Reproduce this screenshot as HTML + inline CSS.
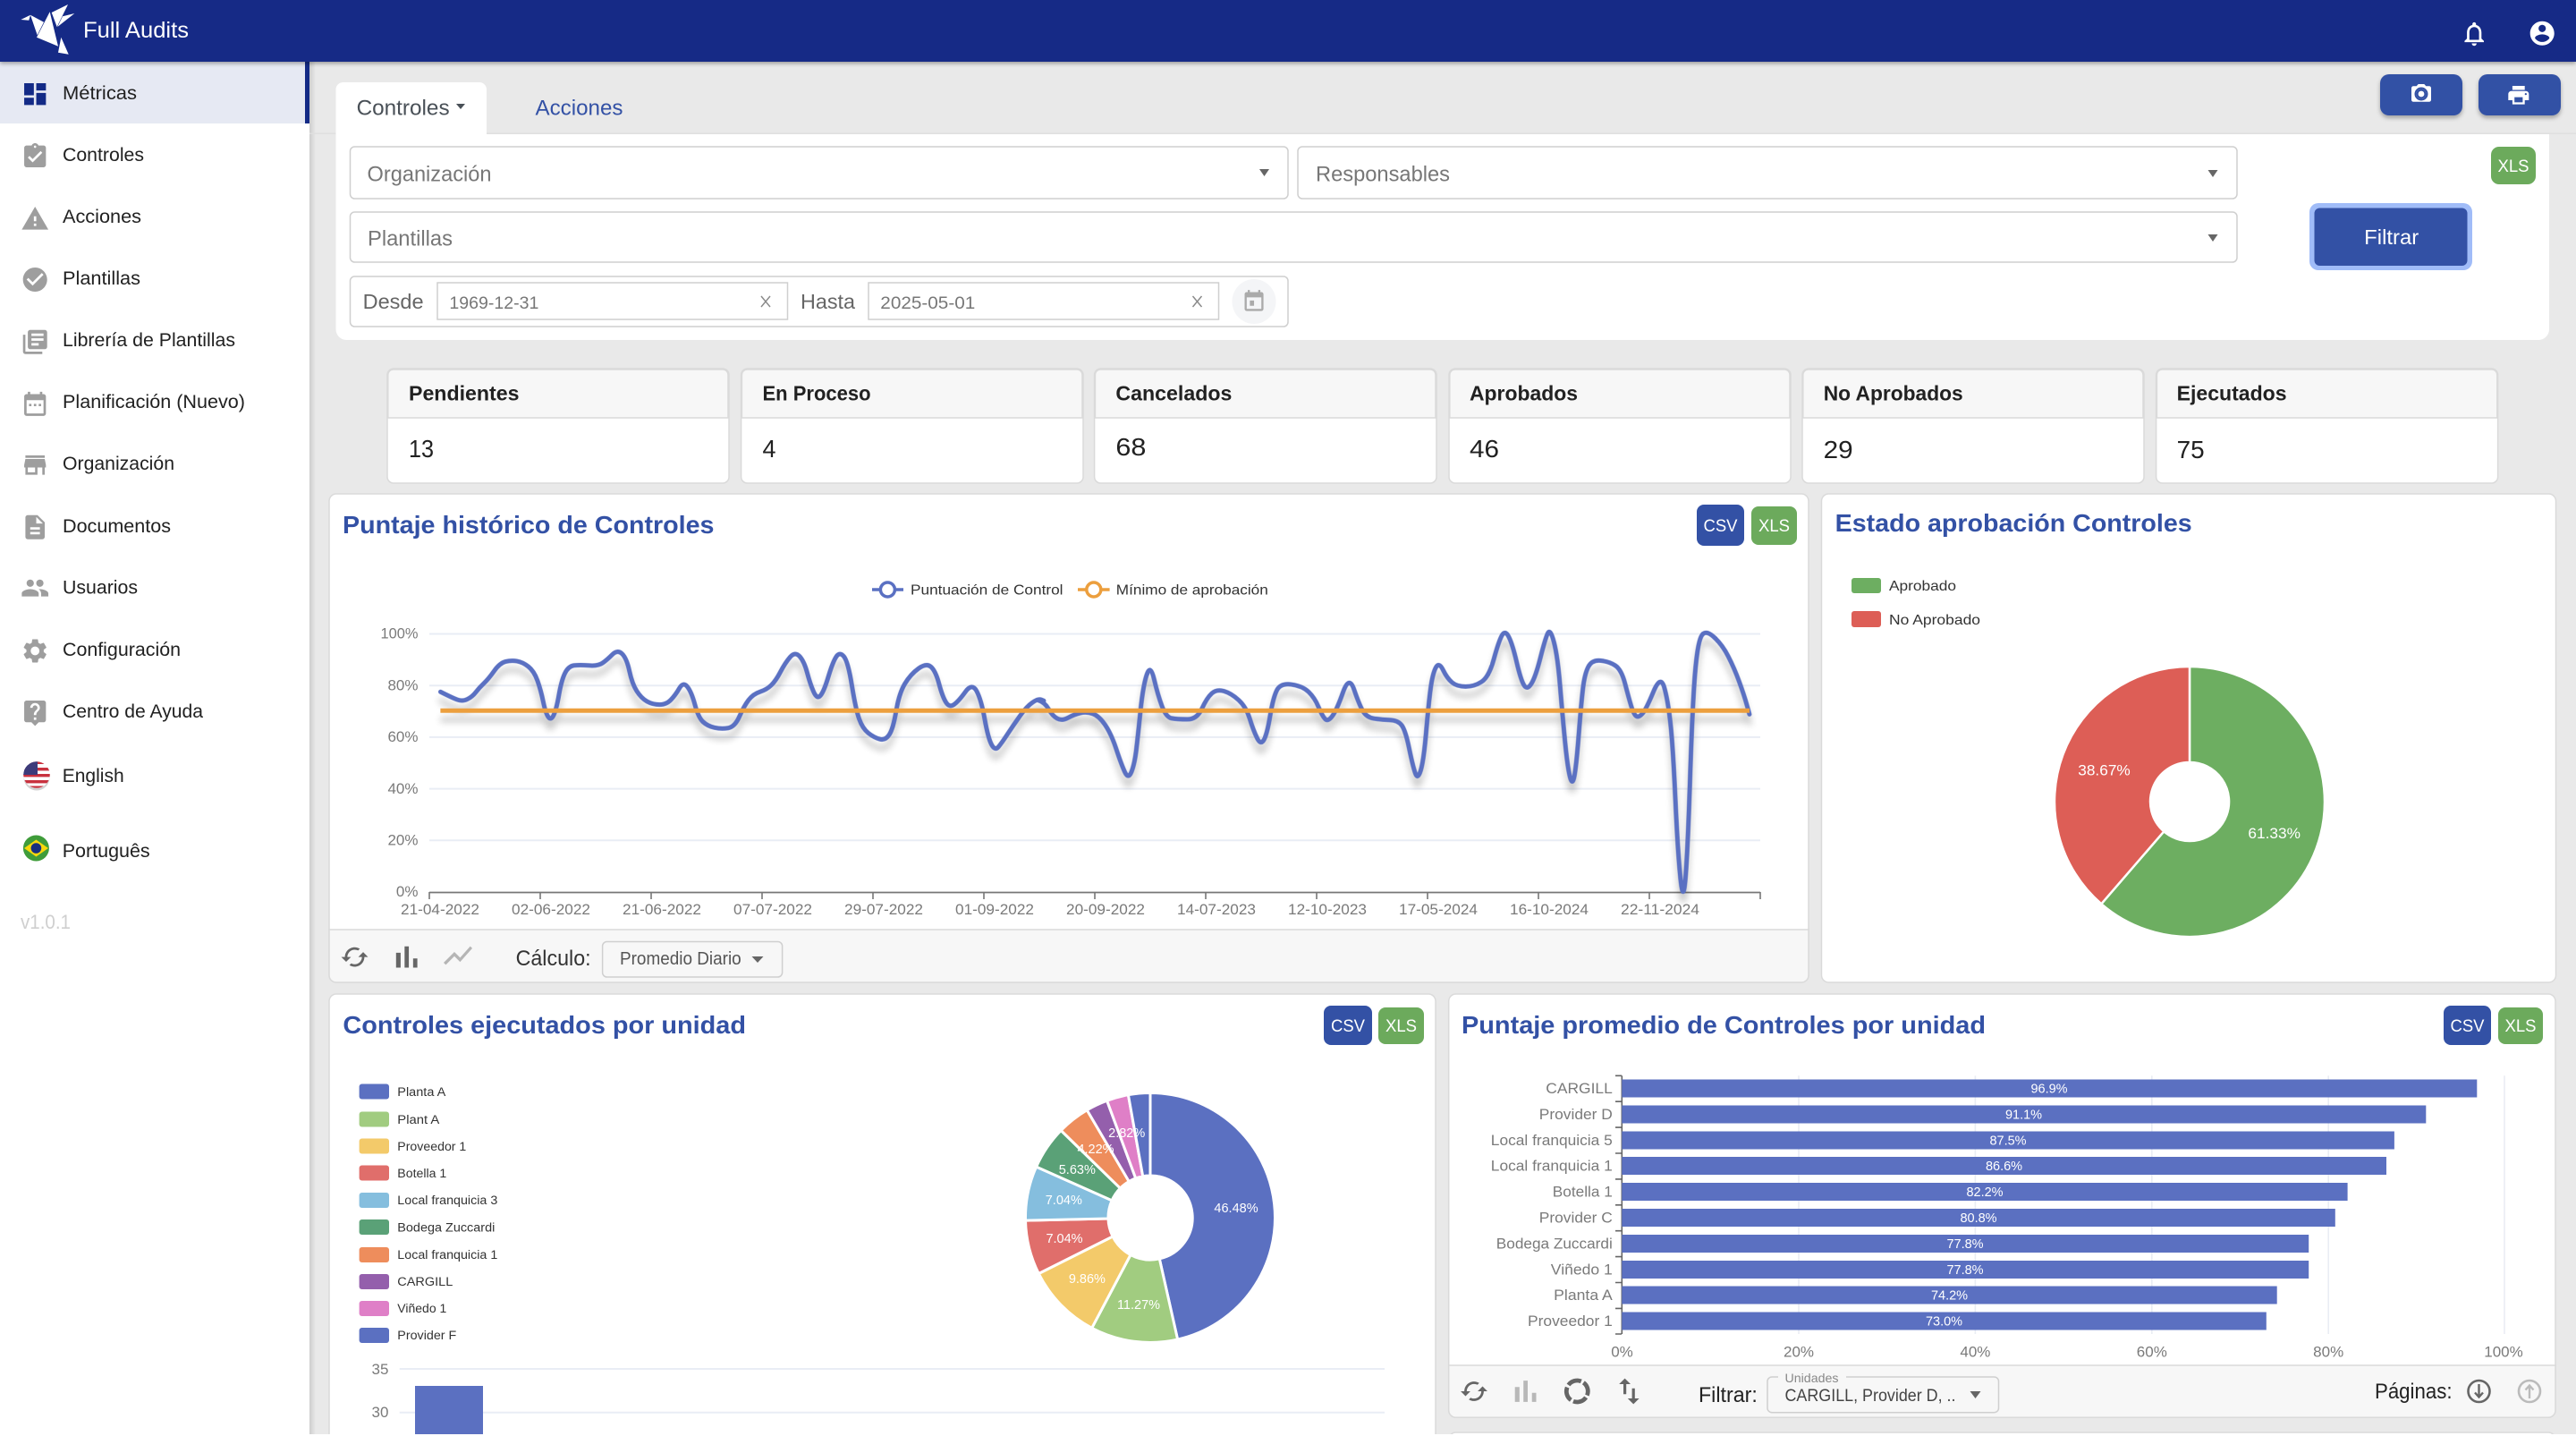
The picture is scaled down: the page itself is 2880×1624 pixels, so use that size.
<!DOCTYPE html>
<html lang="es">
<head>
<meta charset="utf-8">
<title>Full Audits - Métricas</title>
<style>
html,body{margin:0;padding:0;background:#fff;width:2880px;height:1624px;overflow:hidden}
svg{display:block}
text{font-family:"Liberation Sans",sans-serif;fill:#333}
.nav text{fill:#212121;font-size:21.5px}
.ic{fill:#9e9e9e}
.ttl{font-size:28px;font-weight:700;fill:#3351a5}
.ph{font-size:24px;fill:#777}
.ct{font-size:23px;font-weight:700;fill:#212121}
.cv{font-size:28px;fill:#212121}
.ax,.ax text{font-size:17px;fill:#7a7a7a}
.lg{font-size:16px;fill:#333}
.sl,.sl text{font-size:13.5px;fill:#333}
.wl,.wl text{fill:#fff;text-anchor:middle}
.bt{fill:#fff;font-size:19px;text-anchor:middle}
.grid{stroke:#e9edf5;stroke-width:2}
.box{fill:#fff;stroke:#cfcfcf;stroke-width:1.5}
.card{fill:#fff;stroke:#dadada;stroke-width:1.5}
.foot{fill:#f7f7f7;stroke:#dadada;stroke-width:1.5}
.ln{fill:none;vector-effect:non-scaling-stroke;stroke-linejoin:round;stroke-linecap:round}
</style>
</head>
<body>
<svg xmlns="http://www.w3.org/2000/svg" width="2880" height="1624" viewBox="0 0 2880 1624">
<defs>
<filter id="hs" filterUnits="userSpaceOnUse" x="0" y="0" width="2880" height="1624"><feDropShadow dx="0" dy="2" stdDeviation="2.5" flood-color="#000" flood-opacity=".35"/></filter>
<filter id="bs" filterUnits="userSpaceOnUse" x="0" y="0" width="2880" height="1624"><feDropShadow dx="0" dy="3" stdDeviation="2.5" flood-color="#000" flood-opacity=".3"/></filter>
<filter id="blr" filterUnits="userSpaceOnUse" x="380" y="600" width="1700" height="500"><feGaussianBlur stdDeviation="4"/></filter>
<linearGradient id="sg" x1="0" x2="1" y1="0" y2="0"><stop offset="0" stop-color="#000" stop-opacity=".12"/><stop offset="1" stop-color="#000" stop-opacity="0"/></linearGradient>
<clipPath id="cu"><circle cx="41" cy="866" r="14.8"/></clipPath>
<clipPath id="cb"><circle cx="40.4" cy="948" r="14.5"/></clipPath>
<g id="lp">
<path transform="translate(370 550) scale(.5102 .35714)" class="ln" d="M240 625 Q265 643 276.5 649.5 Q288 656 299 648 Q310 640 317.5 626 Q325 612 335 598.5 Q345 585 357.5 560 Q370 535 382.5 530.5 Q395 526 407.5 529 Q420 532 432.5 546 Q445 560 452.5 590 Q460 620 465 655 Q470 690 476 703 Q482 716 488 698 Q494 680 499.5 635 Q505 590 512.5 567.5 Q520 545 532.5 542.5 Q545 540 565 542.5 Q585 545 595 535 Q605 525 616.5 508.5 Q628 492 638 506 Q648 520 654 560 Q660 600 670 622.5 Q680 645 692.5 655 Q705 665 720 665 Q735 665 745 650 Q755 635 763.5 614 Q772 593 781 609 Q790 625 797.5 665 Q805 705 815 718.5 Q825 732 840 737 Q855 742 870 738.5 Q885 735 895 702.5 Q905 670 915 651 Q925 632 940 625 Q955 618 965 604 Q975 590 985 562.5 Q995 535 1006 516.5 Q1017 498 1027 514 Q1037 530 1043.5 565 Q1050 600 1057.5 624.5 Q1065 649 1072.5 637 Q1080 625 1090 577.5 Q1100 530 1107.5 514.5 Q1115 499 1124 514.5 Q1133 530 1141.5 605 Q1150 680 1157.5 710 Q1165 740 1177.5 754 Q1190 768 1202.5 773 Q1215 778 1223.5 759 Q1232 740 1238.5 685 Q1245 630 1257.5 600 Q1270 570 1287.5 552 Q1305 534 1315 547 Q1325 560 1332.5 600 Q1340 640 1347.5 657.5 Q1355 675 1365 665 Q1375 655 1390 625.5 Q1405 596 1415 623 Q1425 650 1432.5 710 Q1440 770 1447.5 790 Q1455 810 1462.5 797.5 Q1470 785 1482.5 757.5 Q1495 730 1510 700 Q1525 670 1537.5 658 Q1550 646 1556 649.5 L1562 653"/>
<path transform="translate(1160 620) scale(.5485 .33333)" class="ln" d="M0 487 Q15 495 22.5 517.5 Q30 540 40 549 Q50 558 62.5 546.5 Q75 535 87.5 530.5 Q100 526 112.5 533 Q125 540 137.5 570 Q150 600 160 650 Q170 700 177.5 727.5 Q185 755 191.5 727.5 Q198 700 201.5 650 Q205 600 210 520 Q215 440 222.5 402.5 Q230 365 237.5 417.5 Q245 470 253.5 507.5 Q262 545 273.5 548.5 Q285 552 305 552 Q325 552 335 516 Q345 480 355 465 Q365 450 380 457.5 Q395 465 410 487.5 Q425 510 432.5 550 Q440 590 447.5 615 Q455 640 461.5 620 Q468 600 474 540 Q480 480 487.5 455 Q495 430 517.5 435 Q540 440 552.5 460 Q565 480 572.5 510 Q580 540 586 550.5 Q592 561 601 540.5 Q610 520 622.5 461.5 Q635 403 645 451.5 Q655 500 662.5 522.5 Q670 545 685 549 Q700 553 717.5 554 Q735 555 742.5 572.5 Q750 590 757.5 650 Q765 710 770 733 Q775 756 781 723 Q787 690 792 595 Q797 500 801 450 Q805 400 811.5 379 Q818 358 826.5 386.5 Q835 415 845 428.5 Q855 442 872.5 442 Q890 442 905 426 Q920 410 930 350 Q940 290 946.5 270.5 Q953 251 960.5 275.5 Q968 300 976.5 360 Q985 420 991.5 437.5 Q998 455 1006.5 432.5 Q1015 410 1025 345 Q1035 280 1040 263 Q1045 246 1052.5 293 Q1060 340 1065 440 Q1070 540 1075 625 Q1080 710 1085 743.5 Q1090 777 1094 743.5 Q1098 710 1103 605 Q1108 500 1111.5 450 Q1115 400 1122.5 376 Q1130 352 1147.5 355 Q1165 358 1177.5 371.5 Q1190 385 1197.5 432.5 Q1205 480 1210 507.5 Q1215 535 1220 541 Q1225 547 1232.5 533.5 Q1240 520 1255 460.5 Q1270 401 1277.5 445.5 Q1285 490 1290 565 Q1295 640 1300 820 Q1305 1000 1310.5 1086.5 Q1316 1173 1320.5 1086.5 Q1325 1000 1330 750 Q1335 500 1340 400 Q1345 300 1352.5 274.5 Q1360 249 1377.5 274.5 Q1395 300 1407.5 340 Q1420 380 1430 425 Q1440 470 1445.5 502.5 L1451 535"/>
</g>
</defs>

<!-- page background -->
<rect width="2880" height="1624" fill="#e9e9e9"/>

<!-- sidebar -->
<rect x="346" y="69" width="7" height="1555" fill="url(#sg)"/>
<rect x="0" y="69" width="346" height="1555" fill="#fff"/>
<rect x="0" y="69" width="341" height="69" fill="#e6e9f3"/>
<rect x="341" y="69" width="5" height="69" fill="#132a86"/>

<g class="ic">
<path transform="translate(23 89) scale(1.35)" fill="#132a86" d="M3 13h8V3H3v10zm0 8h8v-6H3v6zm10 0h8V11h-8v10zm0-18v6h8V3h-8z"/>
<path transform="translate(23 158.6) scale(1.35)" d="M19 3h-4.18C14.4 1.84 13.3 1 12 1c-1.3 0-2.4.84-2.82 2H5c-1.1 0-2 .9-2 2v14c0 1.1.9 2 2 2h14c1.1 0 2-.9 2-2V5c0-1.1-.9-2-2-2zm-7 0c.55 0 1 .45 1 1s-.45 1-1 1-1-.45-1-1 .45-1 1-1zm-2 14l-4-4 1.41-1.41L10 14.17l6.59-6.59L18 9l-8 8z"/>
<path transform="translate(23 228.3) scale(1.35)" d="M1 21h22L12 2 1 21zm12-3h-2v-2h2v2zm0-4h-2v-4h2v4z"/>
<path transform="translate(23 296.3) scale(1.35)" d="M12 2C6.48 2 2 6.48 2 12s4.48 10 10 10 10-4.48 10-10S17.52 2 12 2zm-2 15l-5-5 1.41-1.41L10 14.17l7.59-7.59L19 8l-9 9z"/>
<path transform="translate(23 366) scale(1.35)" d="M4 6H2v14c0 1.1.9 2 2 2h14v-2H4V6zm16-4H8c-1.1 0-2 .9-2 2v12c0 1.1.9 2 2 2h12c1.1 0 2-.9 2-2V4c0-1.1-.9-2-2-2zm-1 9H9V9h10v2zm-4 4H9v-2h6v2zm4-8H9V5h10v2z"/>
<path transform="translate(23 436.5) scale(1.35)" d="M19 3h-1V1h-2v2H8V1H6v2H5c-1.11 0-1.99.9-1.99 2L3 19c0 1.1.89 2 2 2h14c1.1 0 2-.9 2-2V5c0-1.1-.9-2-2-2zm0 16H5V8h14v11zM7 11h2v2H7zm4 0h2v2h-2zm4 0h2v2h-2z"/>
<path transform="translate(23 503.6) scale(1.35)" d="M20 4H4v2h16V4zm1 10v-2l-1-5H4l-1 5v2h1v6h10v-6h4v6h2v-6h1zm-9 4H6v-4h6v4z"/>
<path transform="translate(23 573) scale(1.35)" d="M14 2H6c-1.1 0-1.99.9-1.99 2L4 20c0 1.1.89 2 1.99 2H18c1.1 0 2-.9 2-2V8l-6-6zm2 16H8v-2h8v2zm0-4H8v-2h8v2zm-3-5V3.5L18.5 9H13z"/>
<path transform="translate(23 641) scale(1.35)" d="M16 11c1.66 0 2.99-1.34 2.99-3S17.66 5 16 5c-1.66 0-3 1.34-3 3s1.34 3 3 3zm-8 0c1.66 0 2.99-1.34 2.99-3S9.66 5 8 5C6.34 5 5 6.34 5 8s1.34 3 3 3zm0 2c-2.33 0-7 1.17-7 3.5V19h14v-2.5c0-2.33-4.67-3.5-7-3.5zm8 0c-.29 0-.62.02-.97.05 1.16.84 1.97 1.97 1.97 3.45V19h6v-2.5c0-2.33-4.67-3.5-7-3.5z"/>
<path transform="translate(23 711.3) scale(1.35)" d="M19.14 12.94c.04-.3.06-.61.06-.94 0-.32-.02-.64-.07-.94l2.03-1.58c.18-.14.23-.41.12-.61l-1.92-3.32c-.12-.22-.37-.29-.59-.22l-2.39.96c-.5-.38-1.03-.7-1.62-.94l-.36-2.54c-.04-.24-.24-.41-.48-.41h-3.84c-.24 0-.43.17-.47.41l-.36 2.54c-.59.24-1.13.57-1.62.94l-2.39-.96c-.22-.08-.47 0-.59.22L2.74 8.87c-.12.21-.08.47.12.61l2.03 1.58c-.05.3-.09.63-.09.94s.02.64.07.94l-2.03 1.58c-.18.14-.23.41-.12.61l1.92 3.32c.12.22.37.29.59.22l2.39-.96c.5.38 1.03.7 1.62.94l.36 2.54c.05.24.24.41.48.41h3.84c.24 0 .44-.17.47-.41l.36-2.54c.59-.24 1.13-.56 1.62-.94l2.39.96c.22.08.47 0 .59-.22l1.92-3.32c.12-.22.07-.47-.12-.61l-2.01-1.58zM12 15.6c-1.98 0-3.6-1.62-3.6-3.6s1.62-3.6 3.6-3.6 3.6 1.62 3.6 3.6-1.62 3.6-3.6 3.6z"/>
<path transform="translate(23 780.3) scale(1.35)" d="M19 2H5c-1.11 0-2 .9-2 2v14c0 1.1.89 2 2 2h4l3 3 3-3h4c1.1 0 2-.9 2-2V4c0-1.1-.9-2-2-2zm-6 16h-2v-2h2v2zm2.07-7.75l-.9.92C13.45 11.9 13 12.5 13 14h-2v-.5c0-1.1.45-2.1 1.17-2.83l1.24-1.26c.37-.36.59-.86.59-1.41 0-1.1-.9-2-2-2s-2 .9-2 2H8c0-2.21 1.79-4 4-4s4 1.79 4 4c0 .88-.36 1.68-.93 2.25z"/>
</g>

<g class="nav">
<text x="70" y="111" textLength="83" lengthAdjust="spacingAndGlyphs">Métricas</text>
<text x="70" y="180" textLength="91" lengthAdjust="spacingAndGlyphs">Controles</text>
<text x="70" y="249" textLength="88" lengthAdjust="spacingAndGlyphs">Acciones</text>
<text x="70" y="318" textLength="87" lengthAdjust="spacingAndGlyphs">Plantillas</text>
<text x="70" y="387" textLength="193" lengthAdjust="spacingAndGlyphs">Librería de Plantillas</text>
<text x="70" y="456" textLength="204" lengthAdjust="spacingAndGlyphs">Planificación (Nuevo)</text>
<text x="70" y="525" textLength="125" lengthAdjust="spacingAndGlyphs">Organización</text>
<text x="70" y="595" textLength="121" lengthAdjust="spacingAndGlyphs">Documentos</text>
<text x="70" y="663.5" textLength="84" lengthAdjust="spacingAndGlyphs">Usuarios</text>
<text x="70" y="733" textLength="132" lengthAdjust="spacingAndGlyphs">Configuración</text>
<text x="70" y="802" textLength="157" lengthAdjust="spacingAndGlyphs">Centro de Ayuda</text>
<text x="69.7" y="874" textLength="69" lengthAdjust="spacingAndGlyphs">English</text>
<text x="69.7" y="958" textLength="98" lengthAdjust="spacingAndGlyphs">Português</text>
</g>
<text x="23" y="1038" font-size="22" style="fill:#cfcfcf" textLength="56" lengthAdjust="spacingAndGlyphs">v1.0.1</text>

<!-- flags -->
<ellipse cx="41" cy="869" rx="14.5" ry="14.5" fill="#000" opacity=".18"/>
<g clip-path="url(#cu)">
<rect x="26" y="851" width="30" height="30" fill="#fff"/>
<rect x="26" y="851" width="30" height="3" fill="#c8313e"/>
<rect x="26" y="858" width="30" height="3.4" fill="#c8313e"/>
<rect x="26" y="865" width="30" height="3.4" fill="#c8313e"/>
<rect x="26" y="872" width="30" height="3.4" fill="#c8313e"/>
<rect x="26" y="878.5" width="30" height="3" fill="#c8313e"/>
<rect x="26" y="851" width="16" height="15" fill="#3c3b7a"/>
</g>
<g clip-path="url(#cb)">
<rect x="25" y="933" width="31" height="30" fill="#3f9c3a"/>
<polygon points="27,948 40.4,938.5 54,948 40.4,957.5" fill="#f6d80c"/>
<circle cx="40.4" cy="948" r="5.8" fill="#17307f"/>
</g>

<!-- tab strip -->
<rect x="346" y="148.5" width="2534" height="1.5" fill="#dfdfdf"/>
<path d="M375.5 380V100a8 8 0 0 1 8-8H536a8 8 0 0 1 8 8v50H2850V368a12 12 0 0 1-12 12H387.5a12 12 0 0 1-12-12z" fill="#fff"/>
<text x="398.6" y="128.5" font-size="24" style="fill:#495057" textLength="104" lengthAdjust="spacingAndGlyphs">Controles</text>
<polygon points="510,116 520,116 515,122" fill="#495057"/>
<text x="598.5" y="128.5" font-size="24" style="fill:#3351a5" textLength="98" lengthAdjust="spacingAndGlyphs">Acciones</text>

<!-- top buttons -->
<g filter="url(#bs)">
<rect x="2661" y="83" width="92" height="46" rx="10" fill="#3351a5"/>
<rect x="2771" y="83" width="92" height="46" rx="10" fill="#3351a5"/>
</g>
<path fill="#fff" transform="translate(2693.8 91.8) scale(1.1)" d="M9 2L7.17 4H4c-1.1 0-2 .9-2 2v12c0 1.1.9 2 2 2h16c1.1 0 2-.9 2-2V6c0-1.1-.9-2-2-2h-3.17L15 2H9zm3 15c-2.76 0-5-2.24-5-5s2.24-5 5-5 5 2.24 5 5-2.24 5-5 5z"/>
<circle cx="2707" cy="105" r="3.4" fill="#fff"/>
<circle cx="2707" cy="105" r="6.5" fill="none" stroke="#3351a5" stroke-width="2"/>
<path fill="#fff" transform="translate(2802 92.5) scale(1.15)" d="M19 8H5c-1.66 0-3 1.34-3 3v6h4v4h12v-4h4v-6c0-1.66-1.34-3-3-3zm-3 11H8v-5h8v5zm3-7c-.55 0-1-.45-1-1s.45-1 1-1 1 .45 1 1-.45 1-1 1zm-1-9H6v4h12V3z"/>

<!-- filter form -->
<rect class="box" x="391.5" y="164" width="1048.5" height="58" rx="5"/>
<text class="ph" x="410.5" y="202.5" textLength="139" lengthAdjust="spacingAndGlyphs">Organización</text>
<polygon points="1408,189 1419,189 1413.5,197" fill="#666"/>
<rect class="box" x="1451" y="164" width="1050" height="58" rx="5"/>
<text class="ph" x="1471" y="202.5" textLength="150" lengthAdjust="spacingAndGlyphs">Responsables</text>
<polygon points="2468.5,190 2479.5,190 2474,198" fill="#666"/>
<rect class="box" x="391.5" y="237" width="2109.5" height="56" rx="5"/>
<text class="ph" x="411" y="274.5" textLength="95" lengthAdjust="spacingAndGlyphs">Plantillas</text>
<polygon points="2468.5,262 2479.5,262 2474,270" fill="#666"/>
<rect class="box" x="391.5" y="309" width="1048.5" height="56" rx="5"/>
<text x="405.6" y="345" font-size="23" style="fill:#666" textLength="68" lengthAdjust="spacingAndGlyphs">Desde</text>
<rect x="489" y="316" width="391.5" height="41" fill="#fff" stroke="#cfcfcf" stroke-width="1.5"/>
<text x="502.4" y="345" font-size="19" style="fill:#777" textLength="100" lengthAdjust="spacingAndGlyphs">1969-12-31</text>
<path d="M851 331l10 12m0-12l-10 12" stroke="#888" stroke-width="1.4" fill="none"/>
<text x="895" y="345" font-size="23" style="fill:#666" textLength="61" lengthAdjust="spacingAndGlyphs">Hasta</text>
<rect x="971" y="316" width="391.5" height="41" fill="#fff" stroke="#cfcfcf" stroke-width="1.5"/>
<text x="984.3" y="345" font-size="19" style="fill:#777" textLength="106" lengthAdjust="spacingAndGlyphs">2025-05-01</text>
<path d="M1333.5 331l10 12m0-12l-10 12" stroke="#888" stroke-width="1.4" fill="none"/>
<ellipse cx="1402" cy="337" rx="24.5" ry="25" fill="#f4f5f7"/>
<path fill="#aaa" transform="translate(1388 323) scale(1.17)" d="M19 3h-1V1h-2v2H8V1H6v2H5c-1.11 0-1.99.9-1.99 2L3 19c0 1.1.89 2 2 2h14c1.1 0 2-.9 2-2V5c0-1.1-.9-2-2-2zm0 16H5V8h14v11zM8 11h4v5H8z"/>

<rect x="2785" y="164" width="50" height="42" rx="9" fill="#6caa5c"/>
<text class="bt" x="2810" y="192" textLength="35" lengthAdjust="spacingAndGlyphs">XLS</text>
<rect x="2582" y="227" width="182" height="75" rx="10" fill="#a0bcf8"/>
<rect x="2587.5" y="232.5" width="171" height="64.5" rx="6" fill="#3351a5"/>
<text class="bt" x="2673.7" y="273" style="font-size:23px" textLength="61" lengthAdjust="spacingAndGlyphs">Filtrar</text>

<!-- status cards -->
<g>
<rect class="card" x="433" y="412" width="382" height="128" rx="7"/>
<path d="M433.8 467V419a6 6 0 0 1 6-6H808a6 6 0 0 1 6 6V467z" fill="#f7f7f7" stroke="#dadada" stroke-width="1.5"/>
<rect class="card" x="828.6" y="412" width="382.4" height="128" rx="7"/>
<path d="M829.4 467V419a6 6 0 0 1 6-6H1204a6 6 0 0 1 6 6V467z" fill="#f7f7f7" stroke="#dadada" stroke-width="1.5"/>
<rect class="card" x="1223.6" y="412" width="382.4" height="128" rx="7"/>
<path d="M1224.4 467V419a6 6 0 0 1 6-6H1599a6 6 0 0 1 6 6V467z" fill="#f7f7f7" stroke="#dadada" stroke-width="1.5"/>
<rect class="card" x="1620" y="412" width="382" height="128" rx="7"/>
<path d="M1620.8 467V419a6 6 0 0 1 6-6H1995a6 6 0 0 1 6 6V467z" fill="#f7f7f7" stroke="#dadada" stroke-width="1.5"/>
<rect class="card" x="2015" y="412" width="382" height="128" rx="7"/>
<path d="M2015.8 467V419a6 6 0 0 1 6-6H2390a6 6 0 0 1 6 6V467z" fill="#f7f7f7" stroke="#dadada" stroke-width="1.5"/>
<rect class="card" x="2410.6" y="412" width="382" height="128" rx="7"/>
<path d="M2411.4 467V419a6 6 0 0 1 6-6H2785.8a6 6 0 0 1 6 6V467z" fill="#f7f7f7" stroke="#dadada" stroke-width="1.5"/>
</g>
<text class="ct" x="457" y="447.5" textLength="123.5" lengthAdjust="spacingAndGlyphs">Pendientes</text>
<text class="ct" x="852.5" y="447.5" textLength="121" lengthAdjust="spacingAndGlyphs">En Proceso</text>
<text class="ct" x="1247.4" y="447.5" textLength="130" lengthAdjust="spacingAndGlyphs">Cancelados</text>
<text class="ct" x="1643" y="447.5" textLength="121" lengthAdjust="spacingAndGlyphs">Aprobados</text>
<text class="ct" x="2038.7" y="447.5" textLength="156" lengthAdjust="spacingAndGlyphs">No Aprobados</text>
<text class="ct" x="2433.6" y="447.5" textLength="123" lengthAdjust="spacingAndGlyphs">Ejecutados</text>
<text class="cv" x="457" y="511" textLength="28" lengthAdjust="spacingAndGlyphs">13</text>
<text class="cv" x="852.5" y="511" textLength="15" lengthAdjust="spacingAndGlyphs">4</text>
<text class="cv" x="1247.4" y="509" textLength="34" lengthAdjust="spacingAndGlyphs">68</text>
<text class="cv" x="1643" y="511" textLength="33" lengthAdjust="spacingAndGlyphs">46</text>
<text class="cv" x="2038.7" y="512" textLength="33" lengthAdjust="spacingAndGlyphs">29</text>
<text class="cv" x="2433.6" y="512" textLength="31" lengthAdjust="spacingAndGlyphs">75</text>

<!-- panel 1: line chart -->
<rect class="card" x="368" y="552" width="1654" height="546" rx="8"/>
<path class="foot" d="M368 1039H2022V1090a8 8 0 0 1-8 8H376a8 8 0 0 1-8-8z"/>
<text class="ttl" x="383" y="596" textLength="415.5" lengthAdjust="spacingAndGlyphs">Puntaje histórico de Controles</text>
<rect x="1897" y="564" width="53" height="46" rx="8" fill="#3351a5"/>
<text class="bt" x="1923.5" y="594" textLength="38" lengthAdjust="spacingAndGlyphs">CSV</text>
<rect x="1958" y="566" width="51" height="43" rx="8" fill="#6caa5c"/>
<text class="bt" x="1983.5" y="594" textLength="35" lengthAdjust="spacingAndGlyphs">XLS</text>

<path d="M975 659H1010" stroke="#5a70c2" stroke-width="3.5"/>
<circle cx="992.4" cy="659" r="8" fill="#fff" stroke="#5a70c2" stroke-width="3.5"/>
<text class="lg" x="1018" y="664.5" textLength="170.5" lengthAdjust="spacingAndGlyphs">Puntuación de Control</text>
<path d="M1205 659H1240.6" stroke="#ec9f3e" stroke-width="3.5"/>
<circle cx="1222.8" cy="659" r="8" fill="#fff" stroke="#ec9f3e" stroke-width="3.5"/>
<text class="lg" x="1247.8" y="664.5" textLength="170" lengthAdjust="spacingAndGlyphs">Mínimo de aprobación</text>

<g class="grid">
<path d="M480 708.5H1968M480 766.2H1968M480 823.9H1968M480 881.6H1968M480 939.3H1968"/>
</g>
<path d="M480 997.5H1968" stroke="#777" stroke-width="1.8"/>
<path d="M480 997v8M604 997v8M728 997v8M852 997v8M976 997v8M1100 997v8M1224 997v8M1348 997v8M1472 997v8M1596 997v8M1720 997v8M1844 997v8M1968 997v8" stroke="#777" stroke-width="1.6"/>
<g class="ax">
<text x="467.5" y="713.5" text-anchor="end" textLength="42" lengthAdjust="spacingAndGlyphs">100%</text>
<text x="467.5" y="771.5" text-anchor="end">80%</text>
<text x="467.5" y="829" text-anchor="end">60%</text>
<text x="467.5" y="887" text-anchor="end">40%</text>
<text x="467.5" y="944.5" text-anchor="end">20%</text>
<text x="467.5" y="1002" text-anchor="end">0%</text>
</g>
<g class="ax" text-anchor="middle">
<text x="492" y="1022" textLength="88" lengthAdjust="spacingAndGlyphs">21-04-2022</text>
<text x="616" y="1022" textLength="88" lengthAdjust="spacingAndGlyphs">02-06-2022</text>
<text x="740" y="1022" textLength="88" lengthAdjust="spacingAndGlyphs">21-06-2022</text>
<text x="864" y="1022" textLength="88" lengthAdjust="spacingAndGlyphs">07-07-2022</text>
<text x="988" y="1022" textLength="88" lengthAdjust="spacingAndGlyphs">29-07-2022</text>
<text x="1112" y="1022" textLength="88" lengthAdjust="spacingAndGlyphs">01-09-2022</text>
<text x="1236" y="1022" textLength="88" lengthAdjust="spacingAndGlyphs">20-09-2022</text>
<text x="1360" y="1022" textLength="88" lengthAdjust="spacingAndGlyphs">14-07-2023</text>
<text x="1484" y="1022" textLength="88" lengthAdjust="spacingAndGlyphs">12-10-2023</text>
<text x="1608" y="1022" textLength="88" lengthAdjust="spacingAndGlyphs">17-05-2024</text>
<text x="1732" y="1022" textLength="88" lengthAdjust="spacingAndGlyphs">16-10-2024</text>
<text x="1856" y="1022" textLength="88" lengthAdjust="spacingAndGlyphs">22-11-2024</text>
</g>

<!-- line shadows -->
<g filter="url(#blr)" opacity=".24">
<g transform="translate(0 10)" stroke="#000" stroke-width="5"><use href="#lp"/></g>
<path d="M492.4 804.3H1956" stroke="#000" stroke-width="5" fill="none"/>
</g>
<g stroke="#5a70c2" stroke-width="5"><use href="#lp"/></g>
<path d="M492.4 794.3H1956" stroke="#ec9f3e" stroke-width="5" fill="none"/>

<!-- panel 1 footer -->
<path transform="translate(396.5 1069.6) rotate(90) scale(1.36) translate(-12 -12)" fill="#666" d="M12 4V1L8 5l4 4V6c3.31 0 6 2.69 6 6 0 1.01-.25 1.97-.7 2.8l1.46 1.46C19.54 15.03 20 13.57 20 12c0-4.42-3.58-8-8-8zm0 14c-3.31 0-6-2.69-6-6 0-1.01.25-1.97.7-2.8L5.24 7.74C4.46 8.97 4 10.43 4 12c0 4.42 3.58 8 8 8v3l4-4-4-4v3z"/>
<path transform="translate(454.7 1069.6) scale(1.7) translate(-12 -12)" fill="#666" d="M5 9.2h3V19H5zM10.6 5h2.8v14h-2.8zm5.6 8H19v6h-2.8z"/>
<path transform="translate(512 1068) scale(1.6) translate(-12 -12)" fill="#b5b5b5" d="M3.5 18.49l6-6.01 4 4L22 6.92l-1.41-1.41-7.09 7.97-4-4L2 16.99z"/>
<text x="576.6" y="1079" font-size="24" style="fill:#333" textLength="84" lengthAdjust="spacingAndGlyphs">Cálculo:</text>
<rect x="673.6" y="1052.5" width="201" height="39.5" rx="5" fill="#f7f7f7" stroke="#cfcfcf" stroke-width="1.5"/>
<text x="693" y="1078" font-size="20" style="fill:#555" textLength="135.7" lengthAdjust="spacingAndGlyphs">Promedio Diario</text>
<polygon points="840.5,1069 853.5,1069 847,1076" fill="#666"/>

<!-- panel 2: donut -->
<rect class="card" x="2036.5" y="552" width="821" height="546" rx="8"/>
<text class="ttl" x="2051.7" y="594" textLength="399" lengthAdjust="spacingAndGlyphs">Estado aprobación Controles</text>
<rect x="2070" y="646" width="33" height="17" rx="3" fill="#6dae61"/>
<text class="lg" x="2112" y="660" textLength="75" lengthAdjust="spacingAndGlyphs">Aprobado</text>
<rect x="2070" y="683" width="33" height="18" rx="3" fill="#dd5e56"/>
<text class="lg" x="2112" y="698" textLength="102" lengthAdjust="spacingAndGlyphs">No Aprobado</text>
<g stroke="#fff" stroke-width="2.5" stroke-linejoin="round">
<path fill="#6dae61" d="M2448 745A151 151 0 1 1 2349.3 1010.3L2419.3 929.3A44 44 0 1 0 2448 852Z"/>
<path fill="#dd5e56" d="M2349.3 1010.3A151 151 0 0 1 2448 745L2448 852A44 44 0 0 0 2419.3 929.3Z"/>
</g>
<text class="wl" x="2542.7" y="937" font-size="16.5" textLength="58.5" lengthAdjust="spacingAndGlyphs">61.33%</text>
<text class="wl" x="2352.5" y="866.5" font-size="16.5" textLength="58.5" lengthAdjust="spacingAndGlyphs">38.67%</text>

<!-- panel 3: pie -->
<rect class="card" x="368" y="1111" width="1237" height="520" rx="8"/>
<text class="ttl" x="383.4" y="1155" textLength="450.6" lengthAdjust="spacingAndGlyphs">Controles ejecutados por unidad</text>
<rect x="1480" y="1124" width="54" height="44" rx="8" fill="#3351a5"/>
<text class="bt" x="1507" y="1153" textLength="38" lengthAdjust="spacingAndGlyphs">CSV</text>
<rect x="1541" y="1126" width="51" height="41" rx="8" fill="#6caa5c"/>
<text class="bt" x="1566.5" y="1153" textLength="35" lengthAdjust="spacingAndGlyphs">XLS</text>

<g>
<rect x="401.6" y="1211.5" width="33.4" height="17" rx="3" fill="#5b70c1"/>
<rect x="401.6" y="1242.5" width="33.4" height="17" rx="3" fill="#a1cc80"/>
<rect x="401.6" y="1272.5" width="33.4" height="17" rx="3" fill="#f3ca6a"/>
<rect x="401.6" y="1302.5" width="33.4" height="17" rx="3" fill="#e06e6b"/>
<rect x="401.6" y="1333" width="33.4" height="17" rx="3" fill="#85bede"/>
<rect x="401.6" y="1363" width="33.4" height="17" rx="3" fill="#5aa177"/>
<rect x="401.6" y="1394" width="33.4" height="17" rx="3" fill="#ee8d5c"/>
<rect x="401.6" y="1424" width="33.4" height="17" rx="3" fill="#945fac"/>
<rect x="401.6" y="1454" width="33.4" height="17" rx="3" fill="#df7fc7"/>
<rect x="401.6" y="1484" width="33.4" height="17" rx="3" fill="#5b70c1"/>
</g>
<g class="sl">
<text x="444.3" y="1225" textLength="54" lengthAdjust="spacingAndGlyphs">Planta A</text>
<text x="444.3" y="1256" textLength="47" lengthAdjust="spacingAndGlyphs">Plant A</text>
<text x="444.3" y="1286" textLength="77" lengthAdjust="spacingAndGlyphs">Proveedor 1</text>
<text x="444.3" y="1316" textLength="55" lengthAdjust="spacingAndGlyphs">Botella 1</text>
<text x="444.3" y="1346" textLength="112" lengthAdjust="spacingAndGlyphs">Local franquicia 3</text>
<text x="444.3" y="1376.5" textLength="109" lengthAdjust="spacingAndGlyphs">Bodega Zuccardi</text>
<text x="444.3" y="1407" textLength="112" lengthAdjust="spacingAndGlyphs">Local franquicia 1</text>
<text x="444.3" y="1437" textLength="62" lengthAdjust="spacingAndGlyphs">CARGILL</text>
<text x="444.3" y="1467" textLength="55" lengthAdjust="spacingAndGlyphs">Viñedo 1</text>
<text x="444.3" y="1497" textLength="66" lengthAdjust="spacingAndGlyphs">Provider F</text>
</g>
<g stroke="#fff" stroke-width="3" stroke-linejoin="round">
<path fill="#5b70c1" d="M1286 1221.5A139.5 139.5 0 0 1 1316.6 1497.1L1296.3 1406.9A47 47 0 0 0 1286 1314Z"/>
<path fill="#a1cc80" d="M1316.6 1497.1A139.5 139.5 0 0 1 1220.7 1484.3L1264 1402.5A47 47 0 0 0 1296.3 1406.9Z"/>
<path fill="#f3ca6a" d="M1220.7 1484.3A139.5 139.5 0 0 1 1161.3 1423.5L1244 1382A47 47 0 0 0 1264 1402.5Z"/>
<path fill="#e06e6b" d="M1161.3 1423.5A139.5 139.5 0 0 1 1146.5 1364.1L1239 1362A47 47 0 0 0 1244 1382Z"/>
<path fill="#85bede" d="M1146.5 1364.1A139.5 139.5 0 0 1 1158.6 1304.1L1243.1 1341.8A47 47 0 0 0 1239 1362Z"/>
<path fill="#5aa177" d="M1158.6 1304.1A139.5 139.5 0 0 1 1186.2 1263.5L1252.4 1328.1A47 47 0 0 0 1243.1 1341.8Z"/>
<path fill="#ee8d5c" d="M1186.2 1263.5A139.5 139.5 0 0 1 1215.3 1240.7L1262.2 1320.5A47 47 0 0 0 1252.4 1328.1Z"/>
<path fill="#945fac" d="M1215.3 1240.7A139.5 139.5 0 0 1 1237.6 1230.2L1269.7 1316.9A47 47 0 0 0 1262.2 1320.5Z"/>
<path fill="#df7fc7" d="M1237.6 1230.2A139.5 139.5 0 0 1 1261.4 1223.7L1277.7 1314.7A47 47 0 0 0 1269.7 1316.9Z"/>
<path fill="#5b70c1" d="M1261.4 1223.7A139.5 139.5 0 0 1 1286 1221.5L1286 1314A47 47 0 0 0 1277.7 1314.7Z"/>
</g>
<g class="wl" font-size="14.5">
<text x="1382" y="1355">46.48%</text>
<text x="1273" y="1463">11.27%</text>
<text x="1215.4" y="1434">9.86%</text>
<text x="1189.3" y="1346">7.04%</text>
<text x="1190" y="1389">7.04%</text>
<text x="1204.3" y="1312">5.63%</text>
<text x="1225" y="1289">4.22%</text>
<text x="1259.7" y="1271">2.82%</text>
</g>
<path d="M446.7 1530H1548M446.7 1578.7H1548" class="grid"/>
<text class="ax" x="425" y="1536" text-anchor="middle">35</text>
<text class="ax" x="425" y="1584" text-anchor="middle">30</text>
<rect x="464" y="1549" width="76" height="60" fill="#5b70c1"/>

<!-- panel 4: bars -->
<rect class="card" x="1619.7" y="1111" width="1237.3" height="473.3" rx="8"/>
<path class="foot" d="M1619.7 1526H2857V1576.3a8 8 0 0 1-8 8H1627.7a8 8 0 0 1-8-8z"/>
<text class="ttl" x="1634" y="1155" textLength="586" lengthAdjust="spacingAndGlyphs">Puntaje promedio de Controles por unidad</text>
<rect x="2732" y="1124" width="53" height="44" rx="8" fill="#3351a5"/>
<text class="bt" x="2758.5" y="1153" textLength="38" lengthAdjust="spacingAndGlyphs">CSV</text>
<rect x="2793" y="1126" width="50" height="41" rx="8" fill="#6caa5c"/>
<text class="bt" x="2818" y="1153" textLength="35" lengthAdjust="spacingAndGlyphs">XLS</text>

<path d="M2011 1202.3V1491M2208.4 1202.3V1491M2405.8 1202.3V1491M2603.2 1202.3V1491M2800 1202.3V1491" stroke="#eaedf4" stroke-width="1.6"/>
<path d="M1813.3 1202.3V1491" stroke="#666" stroke-width="1.6"/>
<path d="M1806 1202.3h7M1806 1231.2h7M1806 1260.1h7M1806 1289h7M1806 1317.9h7M1806 1346.8h7M1806 1375.7h7M1806 1404.6h7M1806 1433.5h7M1806 1462.4h7M1806 1491h7" stroke="#666" stroke-width="1.6"/>
<g fill="#5b70c1">
<rect x="1813.3" y="1206.5" width="956" height="20"/>
<rect x="1813.3" y="1235.5" width="899" height="20"/>
<rect x="1813.3" y="1264.5" width="863.6" height="20"/>
<rect x="1813.3" y="1293" width="854.7" height="20"/>
<rect x="1813.3" y="1322" width="811.3" height="20"/>
<rect x="1813.3" y="1351" width="797.5" height="20"/>
<rect x="1813.3" y="1380" width="767.9" height="20"/>
<rect x="1813.3" y="1409" width="767.9" height="20"/>
<rect x="1813.3" y="1437.5" width="732.4" height="20"/>
<rect x="1813.3" y="1466.5" width="720.5" height="20"/>
</g>
<g class="wl" font-size="14.5">
<text x="2291" y="1221.5">96.9%</text>
<text x="2262.5" y="1250.5">91.1%</text>
<text x="2245" y="1279.5">87.5%</text>
<text x="2240.5" y="1308">86.6%</text>
<text x="2219" y="1337">82.2%</text>
<text x="2212" y="1366">80.8%</text>
<text x="2197" y="1395">77.8%</text>
<text x="2197" y="1424">77.8%</text>
<text x="2179.5" y="1452.5">74.2%</text>
<text x="2173.5" y="1481.5">73.0%</text>
</g>
<g>
<text class="ax" x="1802.8" y="1222" text-anchor="end" textLength="74.5" lengthAdjust="spacingAndGlyphs">CARGILL</text>
<text class="ax" x="1802.8" y="1251" text-anchor="end" textLength="82" lengthAdjust="spacingAndGlyphs">Provider D</text>
<text class="ax" x="1802.8" y="1280" text-anchor="end" textLength="136" lengthAdjust="spacingAndGlyphs">Local franquicia 5</text>
<text class="ax" x="1802.8" y="1308.5" text-anchor="end" textLength="136" lengthAdjust="spacingAndGlyphs">Local franquicia 1</text>
<text class="ax" x="1802.8" y="1337.5" text-anchor="end" textLength="67" lengthAdjust="spacingAndGlyphs">Botella 1</text>
<text class="ax" x="1802.8" y="1366.5" text-anchor="end" textLength="82" lengthAdjust="spacingAndGlyphs">Provider C</text>
<text class="ax" x="1802.8" y="1395.5" text-anchor="end" textLength="130" lengthAdjust="spacingAndGlyphs">Bodega Zuccardi</text>
<text class="ax" x="1802.8" y="1424.5" text-anchor="end" textLength="69" lengthAdjust="spacingAndGlyphs">Viñedo 1</text>
<text class="ax" x="1802.8" y="1453" text-anchor="end" textLength="65.6" lengthAdjust="spacingAndGlyphs">Planta A</text>
<text class="ax" x="1802.8" y="1482" text-anchor="end" textLength="94.8" lengthAdjust="spacingAndGlyphs">Proveedor 1</text>
</g>
<g class="ax" text-anchor="middle">
<text x="1813.5" y="1516.5">0%</text>
<text x="2011" y="1516.5">20%</text>
<text x="2208.4" y="1516.5">40%</text>
<text x="2405.8" y="1516.5">60%</text>
<text x="2603.2" y="1516.5">80%</text>
<text x="2799" y="1516.5">100%</text>
</g>

<!-- panel 4 footer -->
<path transform="translate(1648 1555) rotate(90) scale(1.36) translate(-12 -12)" fill="#666" d="M12 4V1L8 5l4 4V6c3.31 0 6 2.69 6 6 0 1.01-.25 1.97-.7 2.8l1.46 1.46C19.54 15.03 20 13.57 20 12c0-4.42-3.58-8-8-8zm0 14c-3.31 0-6-2.69-6-6 0-1.01.25-1.97.7-2.8L5.24 7.74C4.46 8.97 4 10.43 4 12c0 4.42 3.58 8 8 8v3l4-4-4-4v3z"/>
<path transform="translate(1705.6 1555) scale(1.7) translate(-12 -12)" fill="#b8b8b8" d="M5 9.2h3V19H5zM10.6 5h2.8v14h-2.8zm5.6 8H19v6h-2.8z"/>
<circle cx="1763.3" cy="1555" r="12" fill="none" stroke="#666" stroke-width="4.8" stroke-dasharray="15.8 3" transform="rotate(35 1763.3 1555)"/>
<path transform="translate(1821.4 1555) scale(1.6) translate(-12 -12)" fill="#666" d="M16 17.01V10h-2v7.01h-3L15 21l4-3.99h-3zM9 3L5 6.99h3V14h2V6.99h3L9 3z"/>
<text x="1899" y="1567" font-size="24" style="fill:#222" textLength="65.8" lengthAdjust="spacingAndGlyphs">Filtrar:</text>
<rect x="1976" y="1539" width="258.5" height="39.7" rx="5" fill="#f7f7f7" stroke="#cfcfcf" stroke-width="1.5"/>
<rect x="1988" y="1534" width="76" height="10" fill="#f7f7f7"/>
<text x="1995.5" y="1545" font-size="14" style="fill:#888" textLength="60" lengthAdjust="spacingAndGlyphs">Unidades</text>
<text x="1995.5" y="1566" font-size="19" style="fill:#444" textLength="191" lengthAdjust="spacingAndGlyphs">CARGILL, Provider D, ..</text>
<polygon points="2202.5,1555 2214.5,1555 2208.5,1563" fill="#666"/>
<text x="2655" y="1563" font-size="24" style="fill:#222" textLength="86.5" lengthAdjust="spacingAndGlyphs">Páginas:</text>
<circle cx="2771.5" cy="1555" r="12" fill="none" stroke="#666" stroke-width="2.6"/>
<path d="M2771.5 1547v14m-4.5-4.5l4.5 5 4.5-5" fill="none" stroke="#666" stroke-width="2.4"/>
<circle cx="2828" cy="1555" r="12" fill="none" stroke="#bbb" stroke-width="2.6"/>
<path d="M2828 1563v-14m-4.5 4.5l4.5-5 4.5 5" fill="none" stroke="#bbb" stroke-width="2.4"/>

<!-- next panel top edge -->
<rect class="card" x="1619.7" y="1601" width="1237.3" height="40" rx="8"/>

<!-- header -->
<rect x="0" y="0" width="2880" height="69" fill="#132a86" filter="url(#hs)"/>
<g fill="#fff">
<polygon points="23.3,22 34,16.7 32.3,22.7"/>
<polygon points="34,16.7 49,24.7 41.7,39.3"/>
<polygon points="55.7,13.3 65,51.7 41,41.7"/>
<polygon points="57.7,14 76,5 63.7,30"/>
<polygon points="64.3,30 70,18.3 83.3,15"/>
<polygon points="68.3,41.7 76.7,60.7 65,58.7"/>
<text x="93" y="42" font-size="25" style="fill:#fff" textLength="118" lengthAdjust="spacingAndGlyphs">Full Audits</text>
<path transform="translate(2750 21.5) scale(1.35)" d="M12 22c1.1 0 2-.9 2-2h-4c0 1.1.9 2 2 2zm6-6v-5c0-3.07-1.63-5.64-4.5-6.32V4c0-.83-.67-1.5-1.5-1.5s-1.5.67-1.5 1.5v.68C7.64 5.36 6 7.92 6 11v5l-2 2v1h16v-1l-2-2zm-2 1H8v-6c0-2.48 1.51-4.5 4-4.5s4 2.02 4 4.5v6z"/>
<path transform="translate(2826 21) scale(1.35)" d="M12 2C6.48 2 2 6.48 2 12s4.48 10 10 10 10-4.48 10-10S17.52 2 12 2zm0 3c1.66 0 3 1.34 3 3s-1.34 3-3 3-3-1.34-3-3 1.34-3 3-3zm0 14.2c-2.5 0-4.71-1.28-6-3.22.03-1.99 4-3.08 6-3.08 1.99 0 5.97 1.09 6 3.08-1.29 1.94-3.5 3.22-6 3.22z"/>
</g>

<!-- bottom white strip -->
<rect x="0" y="1603" width="2880" height="21" fill="#fff"/>
</svg>
</body>
</html>
